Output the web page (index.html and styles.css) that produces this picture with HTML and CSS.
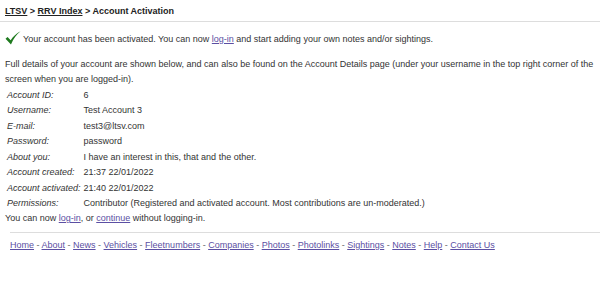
FILE: index.html
```html
<!DOCTYPE html>
<html lang="en">
<head>
    <meta name="viewport" content="width=device-width,initial-scale=1.0">
    <title>Account Activation</title>
    <link rel="stylesheet" href="styles.css">
</head>
<body>

    <div class="crumbs">
        <a href="#">LTSV</a> &gt; <a href="#">RRV Index</a> &gt; Account Activation
    </div>

    <div class="content">
        <div class="notice">
            <svg class="tick" width="16" height="14" viewBox="0 0 15 13">
                <path d="M0.5 7.2 L2.4 5.6 L5.3 8.6 C7.6 5.2 10.6 2.2 14.6 0.2 C10.9 3.2 8 6.8 5.6 12.6 Z" fill="#1f7a1f"/>
            </svg>
            <span>Your account has been activated. You can now <a class="link" href="#">log-in</a> and start adding your own notes and/or sightings.</span>
        </div>

        <p class="intro">Full details of your account are shown below, and can also be found on the Account Details page (under your username in the top right corner of the screen when you are logged-in).</p>

        <table class="details">
            <tr><th>Account ID:</th><td>6</td></tr>
            <tr><th>Username:</th><td>Test Account 3</td></tr>
            <tr><th>E-mail:</th><td>test3@ltsv.com</td></tr>
            <tr><th>Password:</th><td>password</td></tr>
            <tr><th>About you:</th><td>I have an interest in this, that and the other.</td></tr>
            <tr><th>Account created:</th><td>21:37 22/01/2022</td></tr>
            <tr><th>Account activated:</th><td>21:40 22/01/2022</td></tr>
            <tr><th>Permissions:</th><td>Contributor (Registered and activated account. Most contributions are un-moderated.)</td></tr>
        </table>

        <p class="next">You can now <a class="link" href="#">log-in</a>, or <a class="link" href="#">continue</a> without logging-in.</p>
    </div>

    <div class="footer">
        <a href="#">Home</a> - <a href="#">About</a> - <a href="#">News</a> - <a href="#">Vehicles</a> - <a href="#">Fleetnumbers</a> - <a href="#">Companies</a> - <a href="#">Photos</a> - <a href="#">Photolinks</a> - <a href="#">Sightings</a> - <a href="#">Notes</a> - <a href="#">Help</a> - <a href="#">Contact Us</a>
    </div>

</body>
</html>
```

FILE: styles.css
```css
body {
    margin: 0;
    background: #fff;
    font-family: "Liberation Sans", Arial, sans-serif;
    font-size: 9px;
    color: #333;
}

.crumbs {
    padding: 4px 5px 3px;
    line-height: 14px;
    font-weight: bold;
    color: #222;
    border-bottom: 1px solid #ddd;
}

.crumbs a {
    color: #222;
}

.content {
    padding: 0 5px;
}

.link {
    color: #5b4fa3;
}

.notice {
    display: flex;
    align-items: flex-end;
    margin-top: 9px;
    line-height: 15px;
}

.tick {
    margin: 0 2px 2px 0;
}

.intro {
    margin: 10px 0 0;
    line-height: 15px;
}

.details {
    border-collapse: collapse;
}

.details th,
.details td {
    height: 15.5px;
    text-align: left;
    vertical-align: middle;
    white-space: nowrap;
}

.details th {
    padding: 0 0 0 2px;
    font-weight: normal;
    font-style: italic;
}

.details td {
    padding: 0 2px 0 3px;
}

.next {
    margin: 0;
    line-height: 14px;
}

.footer {
    margin: 7px 0 0 10px;
    padding-top: 5px;
    border-top: 1px solid #ddd;
    line-height: 15px;
    color: #666;
}

.footer a {
    color: #5b4fa3;
}
```
